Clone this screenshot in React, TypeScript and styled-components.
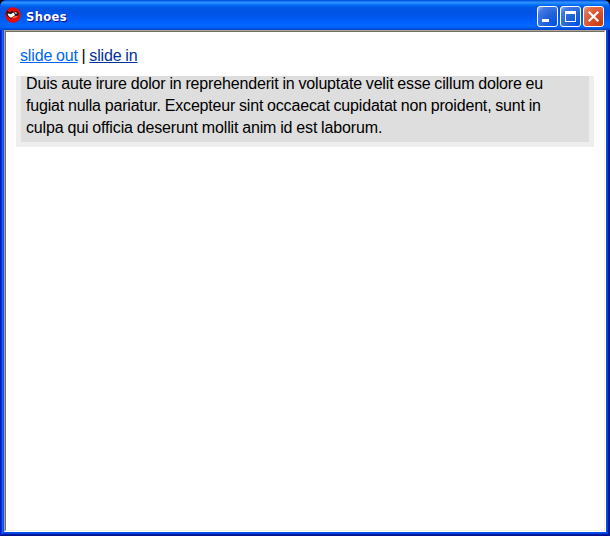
import React from 'react';
import styled, { createGlobalStyle } from 'styled-components';

const Global = createGlobalStyle`
  * { box-sizing: border-box; }
  body { margin: 0; background: #000; overflow: hidden; }
`;

const Window = styled.div`
  width: 610px;
  height: 536px;
  display: flex;
  flex-direction: column;
  border-radius: 7px 7px 0 0;
  overflow: hidden;
  padding: 0 4px 4px;
  background: #0050ee;
  box-shadow: inset 1px 0 #0019cf, inset -1px -1px #00138c, inset 2px 0 #0831d9, inset -2px -2px #001ea0,
    inset 3px 0 #166aee, inset -3px -3px #0441d8;
`;

const TitleBar = styled.header`
  height: 30px;
  flex: none;
  margin: 0 -4px;
  padding: 3px 6px 0 5px;
  display: flex;
  align-items: center;
  background: linear-gradient(
    to bottom,
    #0058e6 0, #0058e6 1px, #3a93ff 2px, #288eff 3px, #127dff 4px, #036ffc 5px, #0262ee 6px,
    #0057e5 8px, #0054e3 11px, #0055eb 15px, #005bf5 19px, #0062ff 23px, #0066ff 26px, #005df5 28px, #0046d0 29px, #0043cf 30px
  );
`;

const LogoMark = styled.svg`
  width: 16px;
  height: 16px;
  margin-top: -3px;
`;

const Title = styled.h1`
  flex: 1;
  margin: 0 0 0 5px;
  font: bold 11.5px/16px 'DejaVu Sans', sans-serif;
  letter-spacing: 0.4px;
  color: #fff;
  text-shadow: 1px 1px #0f1089;
`;

const Buttons = styled.div`
  display: flex;
  gap: 2px;
`;

const Control = styled.button<{ $close?: boolean }>`
  width: 21px;
  height: 21px;
  padding: 0;
  border: 1px solid #fff;
  border-radius: 3px;
  display: block;
  background: ${(p) =>
    p.$close
      ? 'radial-gradient(circle at 90% 90%, #c83c10 0, #da4c27 45%, #e4714f 80%, #f0a48c 100%)'
      : 'radial-gradient(circle at 90% 90%, #0054e9 0, #2263d5 45%, #4479e4 80%, #a3bbec 100%)'};
  svg { display: block; }
`;

const Client = styled.main`
  flex: 1;
  background: #fff;
  border: 1px solid;
  border-color: #aca899 #fff #fff #aca899;
`;

const Inner = styled.div`
  height: 100%;
  border: 1px solid;
  border-color: #716f64 #f1efe2 #f1efe2 #716f64;
  padding: 13px 10px 0;
  font: 16px/22px 'Liberation Sans', Arial, sans-serif;
  color: #000;
`;

const Links = styled.nav`
  height: 31px;
  padding-left: 4px;
  white-space: pre;
  letter-spacing: -0.15px;
  word-spacing: -0.5px;
`;

const Link = styled.a<{ $hover?: boolean }>`
  color: ${(p) => (p.$hover ? '#06e' : '#039')};
  text-decoration: underline;
  text-decoration-thickness: 1px;
  text-underline-offset: 1px;
`;

const Slot = styled.section`
  width: 578px;
  height: 71px;
  padding: 0 5px 5px;
  background: #eee;
`;

const Panel = styled.div`
  height: 66px;
  overflow: hidden;
  background: #dedede;
  padding: 0 0 3px 5px;
  display: flex;
  flex-direction: column;
  justify-content: flex-end;
`;

const Line = styled.span<{ $track: number }>`
  flex: none;
  white-space: nowrap;
  word-spacing: -0.4px;
  letter-spacing: ${(p) => p.$track}px;
`;

const Logo = () => (
  <LogoMark viewBox="0 0 16 16">
    <circle cx="8" cy="8" r="7.8" fill="#e8090b" />
    <path d="M2 3l2.5 2.5L7 4l2 1 3-1 2 3-2 3-3 1-3 1-3-2-2-3z" fill="#241010" />
    <path d="M2.5 6.5L6 7l2.5-1.5L10 8l-2 2.5H5.5L3.5 9z" fill="#fff" />
    <path d="M9 5.5l2-.5 1.5 1.5-2 .5z" fill="#c9b9b2" />
    <path d="M8.5 9l5-.5-1 3-4 1-3-1z" fill="#d8180f" />
    <path d="M8 10.5l4-1" stroke="#efa070" strokeWidth=".9" />
  </LogoMark>
);

const lines = [
  { text: 'Duis aute irure dolor in reprehenderit in voluptate velit esse cillum dolore eu', track: -0.16 },
  { text: 'fugiat nulla pariatur. Excepteur sint occaecat cupidatat non proident, sunt in', track: -0.18 },
  { text: 'culpa qui officia deserunt mollit anim id est laborum.', track: -0.14 },
];

export default function App() {
  return (
    <>
      <Global />
      <Window>
        <TitleBar>
          <Logo />
          <Title>Shoes</Title>
          <Buttons>
            <Control aria-label="Minimize">
              <svg width="19" height="19"><path d="M4 12h7v3H4z" fill="#fff" /></svg>
            </Control>
            <Control aria-label="Maximize">
              <svg width="19" height="19" shapeRendering="crispEdges">
                <path d="M4 4h11v11H4zM5 7v7h9V7z" fill="#fff" fillRule="evenodd" />
              </svg>
            </Control>
            <Control aria-label="Close" $close>
              <svg width="19" height="19">
                <path d="M4.7 4.7l9.6 9.6M14.3 4.7l-9.6 9.6" stroke="#fff" strokeWidth="2.2" />
              </svg>
            </Control>
          </Buttons>
        </TitleBar>
        <Client>
          <Inner>
            <Links>
              <Link $hover>slide out</Link> | <Link>slide in</Link>
            </Links>
            <Slot>
              <Panel>
                {lines.map((l) => (
                  <Line key={l.text} $track={l.track}>{l.text}</Line>
                ))}
              </Panel>
            </Slot>
          </Inner>
        </Client>
      </Window>
    </>
  );
}
